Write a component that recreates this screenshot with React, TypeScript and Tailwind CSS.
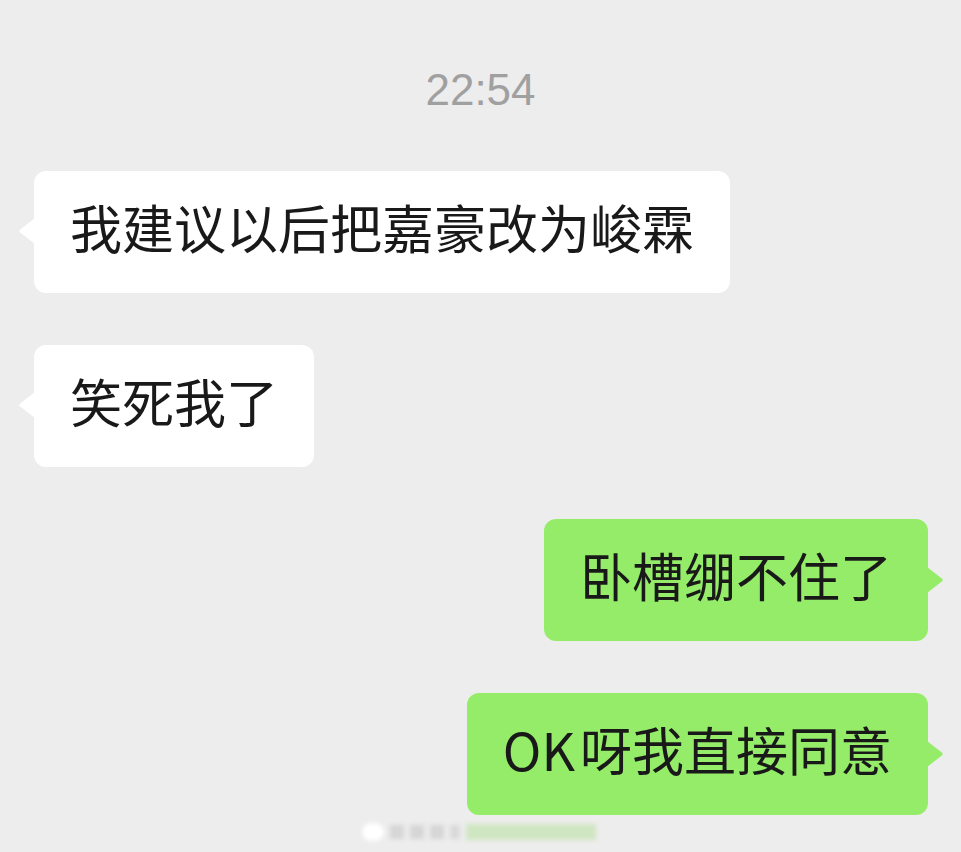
import React from "react";

type Msg = { text: string; side: "left" | "right"; latin?: string };

const messages: Msg[] = [
  { text: "我建议以后把嘉豪改为峻霖", side: "left" },
  { text: "笑死我了", side: "left" },
  { text: "卧槽绷不住了", side: "right" },
  { latin: "OK", text: "呀我直接同意", side: "right" },
];

const cjk = { fontFamily: '"Noto Sans CJK SC", "Noto Sans", sans-serif' };

function Tail({ side, color }: { side: "left" | "right"; color: string }) {
  // little pointer on the bubble edge
  const d =
    side === "left"
      ? "M17 0 L2.5 11.2 Q0 13 2.5 14.8 L17 26 Z"
      : "M0 0 L14.5 11.2 Q17 13 14.5 14.8 L0 26 Z";
  return (
    <svg
      width="17"
      height="26"
      viewBox="0 0 17 26"
      className={
        side === "left"
          ? "absolute left-[-16px] top-[47px]"
          : "absolute right-[-16px] top-[48px]"
      }
    >
      <path d={d} fill={color} />
    </svg>
  );
}

function Bubble({ msg }: { msg: Msg }) {
  const left = msg.side === "left";
  return (
    <div className={left ? "flex justify-start pl-[34px]" : "flex justify-end pr-[33px]"}>
      <div
        className={
          "relative h-[122px] flex items-center px-[36px] pb-[11px] rounded-[12px] " +
          (left ? "bg-white" : "bg-[#95ec69]")
        }
      >
        <Tail side={msg.side} color={left ? "#ffffff" : "#95ec69"} />
        <span
          className="text-[52px] leading-none text-[#191919] whitespace-nowrap"
          style={cjk}
        >
          {msg.latin && <span className="mr-[5px]">{msg.latin}</span>}
          {msg.text}
        </span>
      </div>
    </div>
  );
}

export default function App() {
  return (
    <div className="relative w-full h-[852px] bg-[#ededed] overflow-hidden flex flex-col">
      <div className="mt-[64px] h-[52px] flex items-center justify-center">
        <span
          className="text-[44px] leading-none text-[#a0a0a0]"
          style={{ fontFamily: '"Liberation Sans", Arial, sans-serif' }}
        >
          22:54
        </span>
      </div>
      <div className="mt-[55px] flex flex-col gap-[52px]">
        {messages.map((m, i) => (
          <Bubble key={i} msg={m} />
        ))}
      </div>
      {/* faint watermark strip at the bottom edge */}
      <div className="absolute left-[362px] top-[823px] flex items-center gap-[6px] blur-[2px]">
        <div className="w-[22px] h-[18px] rounded-full bg-white" />
        <div className="w-[14px] h-[14px] bg-[#d6d6d6]" />
        <div className="w-[14px] h-[14px] bg-[#d6d6d6]" />
        <div className="w-[14px] h-[14px] bg-[#d6d6d6]" />
        <div className="w-[10px] h-[14px] bg-[#d9d9d9]" />
        <div className="w-[130px] h-[16px] bg-[#cfe6c2]" />
      </div>
    </div>
  );
}
